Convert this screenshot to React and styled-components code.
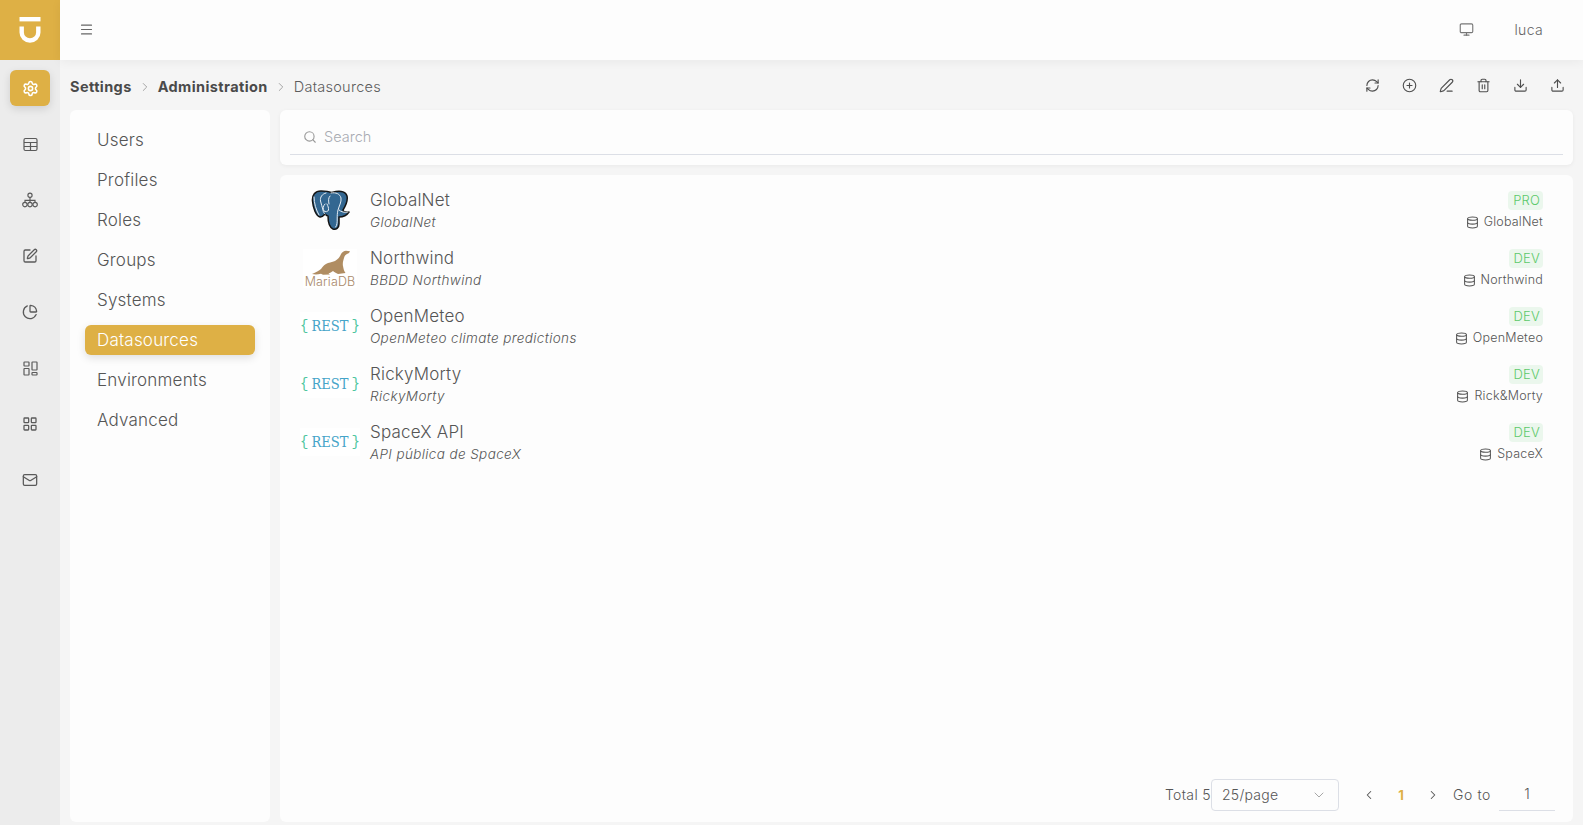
import React from 'react';
import styled, { createGlobalStyle } from 'styled-components';
import {
    ChartPie,
    ChevronDown,
    ChevronLeft,
    ChevronRight,
    CirclePlus,
    Database,
    Download,
    LayoutGrid,
    Mail,
    Menu,
    Monitor,
    PenLine,
    RefreshCw,
    Search,
    Settings,
    SquarePen,
    Trash2,
    Upload,
} from 'lucide-react';

const GOLD = '#deb045';

const menuItems = ['Users', 'Profiles', 'Roles', 'Groups', 'Systems', 'Datasources', 'Environments', 'Advanced'];

const datasources = [
    { name: 'GlobalNet', desc: 'GlobalNet', env: 'PRO', source: 'GlobalNet', logo: 'postgres' },
    { name: 'Northwind', desc: 'BBDD Northwind', env: 'DEV', source: 'Northwind', logo: 'maria' },
    { name: 'OpenMeteo', desc: 'OpenMeteo climate predictions', env: 'DEV', source: 'OpenMeteo', logo: 'rest' },
    { name: 'RickyMorty', desc: 'RickyMorty', env: 'DEV', source: 'Rick&Morty', logo: 'rest' },
    { name: 'SpaceX API', desc: 'API pública de SpaceX', env: 'DEV', source: 'SpaceX', logo: 'rest' },
];

function BrandMark() {
    return (
        <svg width="22" height="26" viewBox="0 0 22 26" fill="none" stroke="#fff" strokeWidth="4.4">
            <path d="M0.500 2.200h21" />
            <path d="M2.700 9.500v6a8.300 8 0 0 0 16.600 0v-6" />
        </svg>
    );
}

function TableIcon() {
    return (
        <svg width="15" height="15" viewBox="0 0 15 15" fill="none" stroke="currentColor" strokeWidth="1.2">
            <rect x="1" y="1.500" width="13" height="12" rx="1.500" />
            <path d="M1 5.500h13M1 9.500h13M7.500 5.500v8" />
        </svg>
    );
}

function NetworkIcon() {
    return (
        <svg width="16" height="16" viewBox="0 0 16 16" fill="none" stroke="currentColor" strokeWidth="1.150">
            <circle cx="8" cy="3.200" r="2.100" />
            <circle cx="2.900" cy="12.600" r="2.200" />
            <circle cx="8" cy="12.600" r="2.200" />
            <circle cx="13.100" cy="12.600" r="2.200" />
            <path d="M8 5.300v5.100M3 10.400V8.300h10v2.100" />
        </svg>
    );
}

function DashboardIcon() {
    return (
        <svg width="15" height="15" viewBox="0 0 15 15" fill="none" stroke="currentColor" strokeWidth="1.200">
            <rect x="1" y="1" width="5" height="4" rx="0.500" />
            <rect x="1" y="7.500" width="5" height="6.500" rx="0.500" />
            <rect x="9" y="1" width="5" height="8" rx="0.500" />
            <rect x="9" y="11.500" width="5" height="2.500" rx="0.500" />
        </svg>
    );
}

function PostgresLogo() {
    return (
        <svg width="40" height="41" viewBox="-1 0 40 41">
            <path
                d="M10 1C4 1 1 5 1.500 11 2 18 5 26 9 27c2 .5 4-2 5-3 1 1 2 2 3 2 0 5 1 11 5 13 3 1 6-1 6-5v-7c4 0 8-2 10-5h-2c-3 0-4-1-4-2 3-5 5-10 4-14-1-4-6-5.500-11-4.500-2 .5-4 1-5 1-3-1.500-7-1.500-10-1.500Z"
                fill="#336791"
                stroke="#151515"
                strokeWidth="1.500"
                strokeLinejoin="round"
            />
            <path
                d="M15 3c-4 1-6 4-5.500 8 .4 3 2 6 2.500 9 .2 2 1 3 2 4M20 3c5-1 9 1 10 5 .7 4-2 8-3 12-.8 3-.8 6-.8 9 0 3 0 6-1.500 8M14 14c-2 2-2.500 5-1 7 1 1 4 1 4.500-1 .3-2-.5-4-1.500-6M19 6c-2 2-1.500 5-1 8M28 20c2 2 6 3 9 2M3 7c0 6 2 13 5 18"
                fill="none"
                stroke="#e6edf3"
                strokeWidth="1"
                strokeLinecap="round"
            />
        </svg>
    );
}

function SealMark() {
    return (
        <svg width="54" height="27" viewBox="0 0 54 27">
            <path
                d="M9 25C13 23 16 22 18 20 20 17 22 15 25 14 28 13 30 13 32 12 35 10 37 8 38 5 39 3 41 2 43 1.700L47 2.200 46 4 44 5C42 6 41.500 7 41 9 40 12 39.500 15 40 17 40.500 20 41 22 42.500 24L35 25C33 24 31 23 30 22 28.500 23 27 24 25.500 24.500L27 25.500 20 25.700 18 24.800C15 25.500 12 25.700 9 25Z"
                fill="#b08d62"
            />
        </svg>
    );
}

function DatasourceLogo({ kind }) {
    if (kind === 'postgres') {
        return (
            <LogoSlot>
                <PostgresLogo />
            </LogoSlot>
        );
    }
    if (kind === 'maria') {
        return (
            <LogoSlot>
                <MariaCard>
                    <SealMark />
                    <MariaWord>MariaDB</MariaWord>
                </MariaCard>
            </LogoSlot>
        );
    }
    return (
        <LogoSlot>
            <RestCard>
                <Brace>{'{'}</Brace>
                <RestWord>REST</RestWord>
                <Brace>{'}'}</Brace>
            </RestCard>
        </LogoSlot>
    );
}

export default function App() {
    return (
        <>
            <GlobalStyle />
            <Page>
                <Brand>
                    <BrandMark />
                </Brand>
                <TopBar>
                    <MenuToggle>
                        <Menu size={15} strokeWidth={1.8} />
                    </MenuToggle>
                    <UserArea>
                        <Monitor size={15} strokeWidth={1.8} />
                        <UserName>luca</UserName>
                    </UserArea>
                </TopBar>
                <Rail>
                    <RailItem $active>
                        <Settings size={17} strokeWidth={2.2} />
                    </RailItem>
                    <RailItem>
                        <TableIcon />
                    </RailItem>
                    <RailItem>
                        <NetworkIcon />
                    </RailItem>
                    <RailItem>
                        <SquarePen size={16} strokeWidth={1.9} />
                    </RailItem>
                    <RailItem>
                        <ChartPie size={16} strokeWidth={1.9} />
                    </RailItem>
                    <RailItem>
                        <DashboardIcon />
                    </RailItem>
                    <RailItem>
                        <LayoutGrid size={16} strokeWidth={1.9} />
                    </RailItem>
                    <RailItem>
                        <Mail size={16} strokeWidth={1.9} />
                    </RailItem>
                </Rail>
                <Main>
                    <CrumbBar>
                        <Crumbs>
                            <Crumb $strong>Settings</Crumb>
                            <ChevronRight size={14} strokeWidth={1.5} color="#999" />
                            <Crumb $strong>Administration</Crumb>
                            <ChevronRight size={14} strokeWidth={1.5} color="#999" />
                            <Crumb>Datasources</Crumb>
                        </Crumbs>
                        <Actions>
                            <RefreshCw size={15} strokeWidth={1.8} />
                            <CirclePlus size={15} strokeWidth={1.8} />
                            <PenLine size={15} strokeWidth={1.8} />
                            <Trash2 size={15} strokeWidth={1.8} />
                            <Download size={15} strokeWidth={1.8} />
                            <Upload size={15} strokeWidth={1.8} />
                        </Actions>
                    </CrumbBar>
                    <Content>
                        <SideMenu>
                            {menuItems.map((item) => (
                                <SideMenuItem key={item} $active={item === 'Datasources'}>
                                    {item}
                                </SideMenuItem>
                            ))}
                        </SideMenu>
                        <Column>
                            <SearchPanel>
                                <SearchField>
                                    <Search size={14} strokeWidth={1.9} />
                                    <SearchInput placeholder="Search" />
                                </SearchField>
                            </SearchPanel>
                            <ListPanel>
                                <List>
                                    {datasources.map((ds) => (
                                        <Row key={ds.name}>
                                            <DatasourceLogo kind={ds.logo} />
                                            <RowText>
                                                <RowName>{ds.name}</RowName>
                                                <RowDesc>{ds.desc}</RowDesc>
                                            </RowText>
                                            <RowMeta>
                                                <EnvTag>{ds.env}</EnvTag>
                                                <SourceName>
                                                    <Database size={13} strokeWidth={1.9} color="#555" />
                                                    {ds.source}
                                                </SourceName>
                                            </RowMeta>
                                        </Row>
                                    ))}
                                </List>
                                <Pagination>
                                    <PagerText>Total 5</PagerText>
                                    <PageSize>
                                        <PageSizeLabel>25/page</PageSizeLabel>
                                        <ChevronDown size={16} strokeWidth={1.3} color="#999" />
                                    </PageSize>
                                    <PagerButton>
                                        <ChevronLeft size={14} strokeWidth={1.8} />
                                    </PagerButton>
                                    <CurrentPage>1</CurrentPage>
                                    <PagerButton>
                                        <ChevronRight size={14} strokeWidth={1.8} />
                                    </PagerButton>
                                    <GoTo>Go to</GoTo>
                                    <GoToInput>1</GoToInput>
                                </Pagination>
                            </ListPanel>
                        </Column>
                    </Content>
                </Main>
            </Page>
        </>
    );
}

const GlobalStyle = createGlobalStyle`
    html, body {
        margin: 0;
        height: 100%;
        overflow: hidden;
        background: #f5f5f5;
    }
    * {
        box-sizing: border-box;
    }
    body {
        font-family: Inter, "Open Sans", sans-serif;
        color: #606060;
    }
`;

const Page = styled.div`
    display: grid;
    grid-template-columns: 60px 1fr;
    grid-template-rows: 60px 1fr;
    height: 825px;
`;

const Brand = styled.div`
    display: flex;
    align-items: center;
    justify-content: center;
    background: ${GOLD};
`;

const TopBar = styled.header`
    display: flex;
    align-items: center;
    justify-content: space-between;
    padding: 0 40px 2px 19px;
    background: #fdfdfd;
    box-shadow: 0 2px 10px rgba(0, 0, 0, 0.05);
    z-index: 1;
`;

const MenuToggle = styled.div`
    display: flex;
    color: #666;
`;

const UserArea = styled.div`
    display: flex;
    align-items: center;
    gap: 40px;
    color: #777;
`;

const UserName = styled.span`
    font-size: 14px;
    font-weight: 300;
    letter-spacing: 0.35px;
    color: #666;
`;

const Rail = styled.nav`
    display: flex;
    flex-direction: column;
    align-items: center;
    gap: 20px;
    padding-top: 10px;
    background: #ececec;
`;

const RailItem = styled.div`
    display: flex;
    align-items: center;
    justify-content: center;
    width: 40px;
    height: 36px;
    border-radius: 6px;
    color: ${(props) => (props.$active ? '#fff' : '#5a5a5a')};
    background: ${(props) => (props.$active ? GOLD : 'transparent')};
    box-shadow: ${(props) => (props.$active ? '0 3px 8px rgba(0, 0, 0, 0.12)' : 'none')};
`;

const Main = styled.main`
    display: flex;
    flex-direction: column;
    min-width: 0;
    padding: 0 10px 3px;
`;

const CrumbBar = styled.div`
    display: flex;
    align-items: center;
    justify-content: space-between;
    height: 50px;
    padding-top: 3px;
`;

const Crumbs = styled.div`
    display: flex;
    align-items: center;
    gap: 6px;
`;

const Crumb = styled.span`
    font-size: 14.500px;
    font-weight: ${(props) => (props.$strong ? 700 : 300)};
    letter-spacing: ${(props) => (props.$strong ? '0.4px' : '0.25px')};
    color: ${(props) => (props.$strong ? '#4a4a4a' : '#5c5c5c')};
`;

const Actions = styled.div`
    display: flex;
    align-items: center;
    gap: 22px;
    margin-bottom: 2px;
    padding-right: 8px;
    color: #4f4f4f;
`;

const Content = styled.div`
    display: grid;
    grid-template-columns: 200px 1fr;
    gap: 10px;
    flex: 1;
    min-height: 0;
`;

const SideMenu = styled.div`
    display: flex;
    flex-direction: column;
    padding: 15px 15px 0;
    background: #fdfdfd;
    border-radius: 6px;
`;

const SideMenuItem = styled.div`
    display: flex;
    align-items: center;
    height: 30px;
    margin-bottom: 10px;
    padding-left: 12px;
    border-radius: 6px;
    font-size: 17px;
    font-weight: 300;
    letter-spacing: 0.2px;
    color: ${(props) => (props.$active ? '#fff' : '#555')};
    background: ${(props) => (props.$active ? GOLD : 'transparent')};
    box-shadow: ${(props) => (props.$active ? '0 3px 8px rgba(0, 0, 0, 0.12)' : 'none')};
`;

const Column = styled.div`
    display: flex;
    flex-direction: column;
    gap: 10px;
    min-width: 0;
`;

const SearchPanel = styled.div`
    height: 55px;
    padding: 10px 10px 0;
    background: #fdfdfd;
    border-radius: 6px;
    box-shadow: 0 1px 4px rgba(0, 0, 0, 0.05);
`;

const SearchField = styled.label`
    display: flex;
    align-items: center;
    gap: 5px;
    height: 35px;
    padding-left: 13px;
    padding-bottom: 1px;
    border-bottom: 1px solid #dcdfe6;
    color: #999;
`;

const SearchInput = styled.input`
    flex: 1;
    border: 0;
    outline: 0;
    background: transparent;
    font-family: inherit;
    font-size: 14.500px;
    font-weight: 300;
    &::placeholder {
        color: #a8abb2;
        opacity: 1;
    }
`;

const ListPanel = styled.div`
    display: flex;
    flex-direction: column;
    flex: 1;
    min-height: 0;
    background: #fdfdfd;
    border-radius: 6px;
`;

const List = styled.div`
    flex: 1;
    padding: 6px 30px 0 20px;
`;

const Row = styled.div`
    display: flex;
    align-items: center;
    gap: 10px;
    height: 58px;
`;

const LogoSlot = styled.div`
    display: flex;
    align-items: center;
    justify-content: center;
    flex: none;
    width: 60px;
`;

const MariaCard = styled.div`
    display: flex;
    flex-direction: column;
    align-items: center;
    width: 54px;
    height: 39px;
    background: #fff;
`;

const MariaWord = styled.span`
    font-size: 12.500px;
    font-weight: 300;
    line-height: 12px;
    letter-spacing: 0.15px;
    color: #a9896a;
`;

const RestCard = styled.div`
    display: flex;
    align-items: center;
    justify-content: center;
    gap: 3px;
    width: 60px;
    height: 28px;
    background: #fff;
`;

const Brace = styled.span`
    font-family: "Liberation Mono", monospace;
    font-size: 14px;
    color: #4fc6a0;
`;

const RestWord = styled.span`
    font-family: "DejaVu Serif Condensed", "DejaVu Serif", serif;
    font-stretch: condensed;
    font-size: 14.500px;
    font-weight: 400;
    color: #45a4c8;
`;

const RowText = styled.div`
    display: flex;
    flex-direction: column;
    gap: 1px;
    flex: 1;
    min-width: 0;
`;

const RowName = styled.div`
    font-size: 17px;
    font-weight: 300;
    line-height: 22px;
    letter-spacing: 0.2px;
    color: #555;
`;

const RowDesc = styled.div`
    font-size: 13.500px;
    font-style: italic;
    font-weight: 300;
    line-height: 20px;
    letter-spacing: 0.38px;
    color: #555;
`;

const RowMeta = styled.div`
    display: flex;
    flex-direction: column;
    align-items: flex-end;
    gap: 3px;
    padding-top: 2px;
`;

const EnvTag = styled.span`
    padding: 0 3px 0 5px;
    border-radius: 4px;
    font-size: 13px;
    font-weight: 300;
    line-height: 19px;
    letter-spacing: 0.2px;
    color: #5cc96a;
    background: #ebf7ed;
`;

const SourceName = styled.span`
    display: flex;
    align-items: center;
    gap: 5px;
    font-size: 12.500px;
    font-weight: 300;
    line-height: 18px;
    letter-spacing: 0.2px;
    color: #555;
`;

const Pagination = styled.div`
    display: flex;
    align-items: center;
    justify-content: flex-end;
    height: 32px;
    margin-bottom: 11px;
    padding-right: 18px;
`;

const PagerText = styled.span`
    margin-bottom: 2px;
    font-size: 14px;
    font-weight: 300;
    letter-spacing: 0.35px;
    color: #555;
`;

const PageSize = styled.div`
    display: flex;
    align-items: center;
    justify-content: space-between;
    width: 128px;
    height: 32px;
    padding: 0 11px 0 10px;
    margin-right: 21px;
    border: 1px solid #dcdfe6;
    border-radius: 4px;
`;

const PageSizeLabel = styled.span`
    margin-bottom: 2px;
    font-size: 14px;
    font-weight: 300;
    letter-spacing: 0.25px;
    color: #555;
`;

const PagerButton = styled.span`
    display: flex;
    justify-content: center;
    width: 18px;
    color: #555;
`;

const CurrentPage = styled.span`
    width: 46px;
    text-align: center;
    font-size: 13px;
    font-weight: 700;
    color: ${GOLD};
`;

const GoTo = styled.span`
    margin: 0 0 2px 11px;
    font-size: 14px;
    font-weight: 300;
    letter-spacing: 0.6px;
    color: #555;
`;

const GoToInput = styled.div`
    width: 56px;
    height: 32px;
    margin-left: 8px;
    border-bottom: 1px solid #dcdfe6;
    text-align: center;
    font-size: 14px;
    font-weight: 300;
    line-height: 30px;
    color: #555;
`;
